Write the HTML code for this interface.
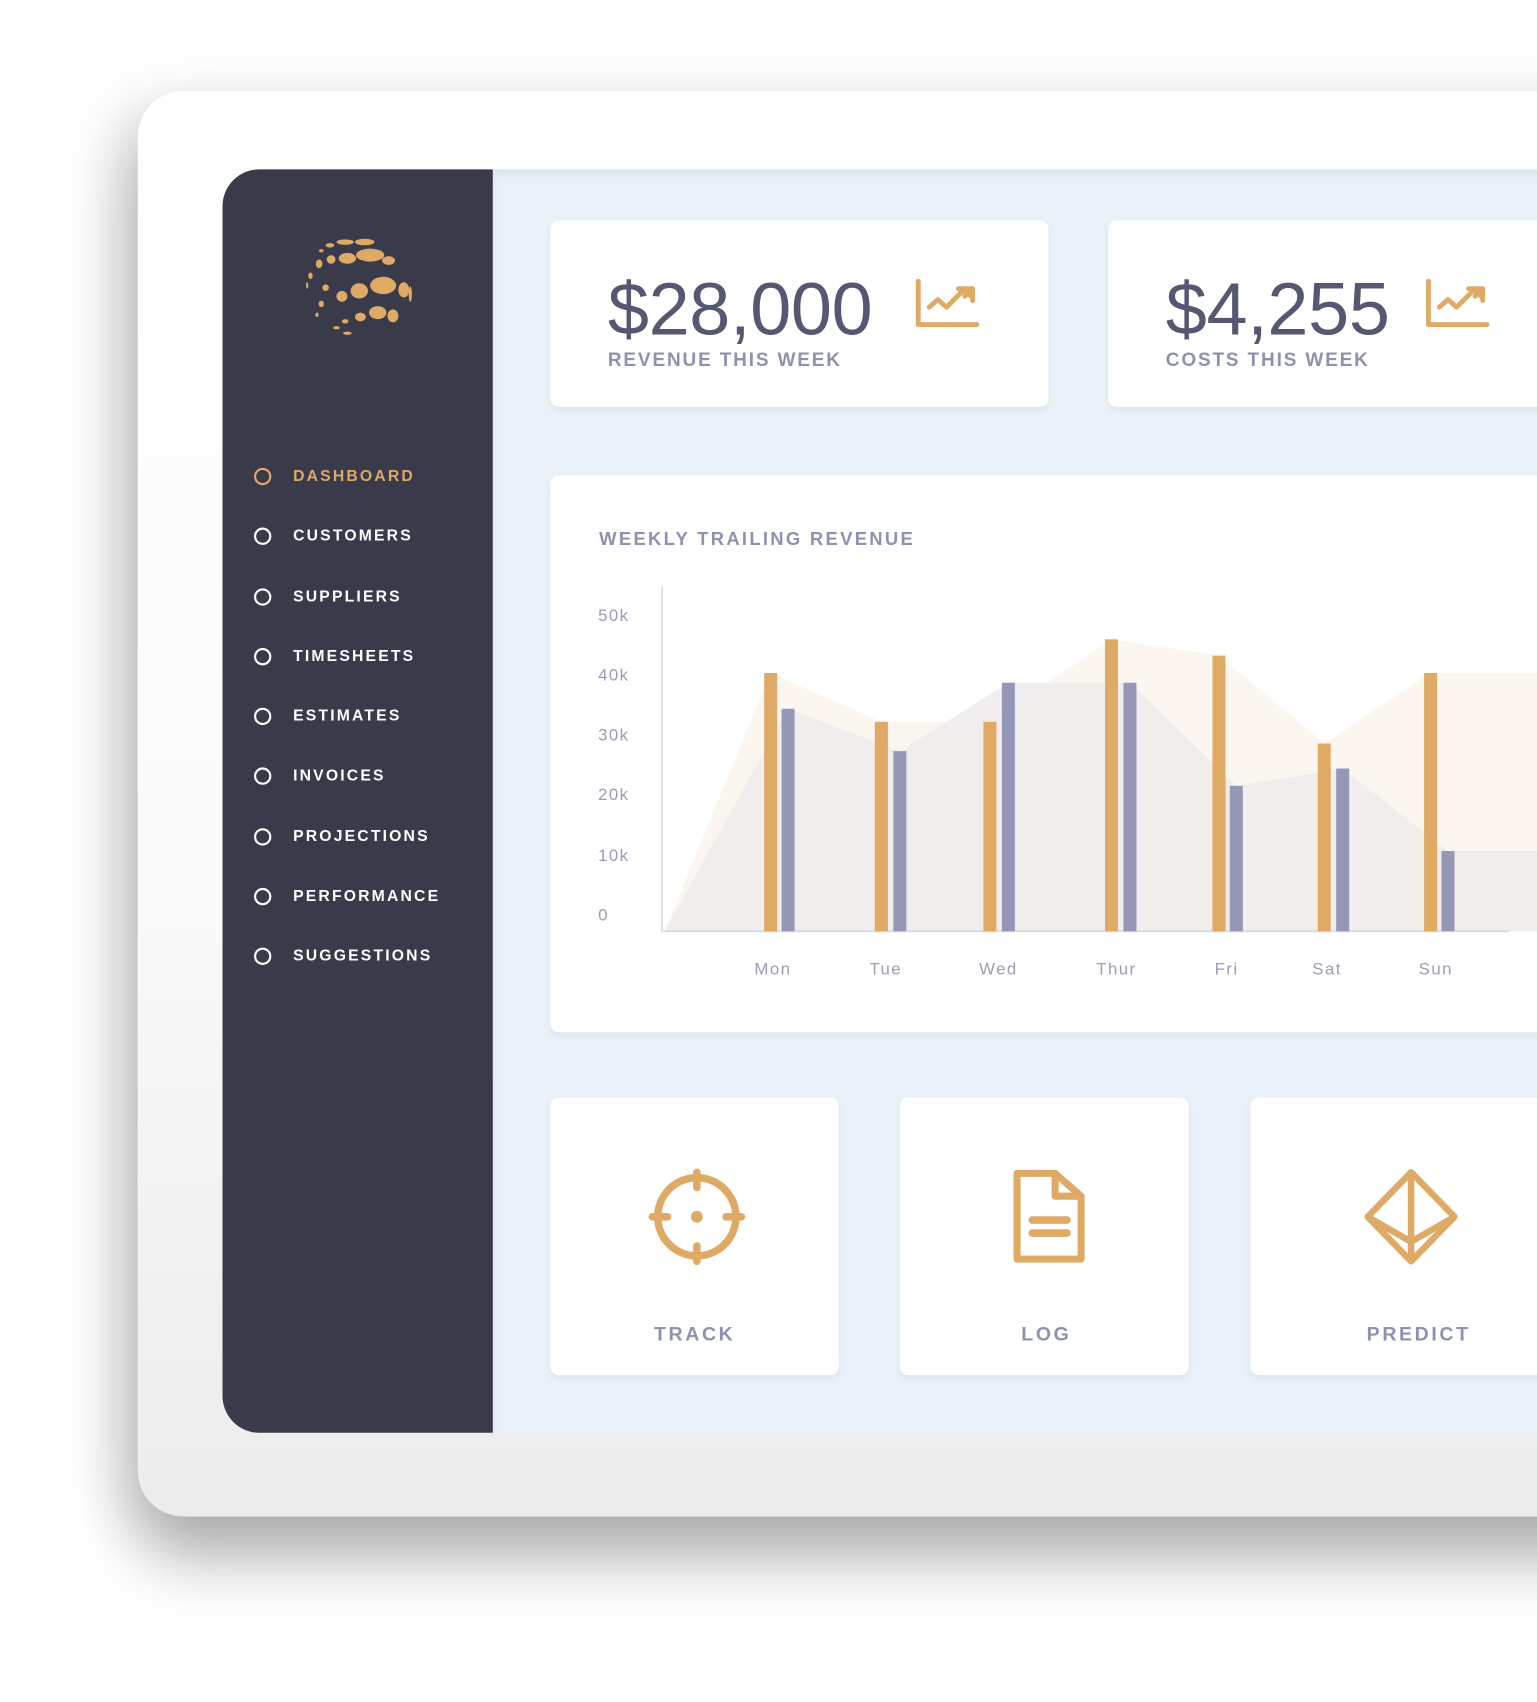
<!DOCTYPE html>
<html><head><meta charset="utf-8"><style>
html,body{margin:0;padding:0;background:#fff;width:1537px;height:1702px;overflow:hidden}
#s{position:absolute;left:0;top:0;width:1416px;height:1568px;transform:scale(1.08545);transform-origin:0 0;font-family:"Liberation Sans",sans-serif}
.frame{position:absolute;left:127px;top:84px;width:1400px;height:1313px;border-radius:42px;background:linear-gradient(180deg,#ffffff 0%,#fafafa 55%,#ececec 100%);box-shadow:0 40px 60px rgba(0,0,0,.28),-20px 10px 60px rgba(0,0,0,.12)}
.side{position:absolute;left:205px;top:156px;width:249px;height:1164px;background:#393a4a;border-radius:34px 0 0 34px}
.main{position:absolute;left:454px;top:156px;width:1000px;height:1164px;background:#ebf1f9;box-shadow:inset 0 6px 8px rgba(120,130,160,.12)}
.card{position:absolute;background:#fff;border-radius:8px;box-shadow:0 3px 6px rgba(150,160,190,.15)}
.amt{position:absolute;font-size:68px;color:#555870;letter-spacing:-.3px;line-height:1}
.lbl{position:absolute;font-size:17.5px;font-weight:bold;color:#8e92b0;letter-spacing:1.7px}
.nav{position:absolute;left:234px;font-size:14.5px;font-weight:bold;color:#fff;letter-spacing:2px;line-height:18px}
.nav i{position:absolute;left:0;top:1px;width:12px;height:12px;border:2px solid #fff;border-radius:50%}
.nav span{position:absolute;left:36px;white-space:nowrap}
.ax{position:absolute;font-size:15.5px;color:#9a9db5;letter-spacing:1.3px}
.bl{position:absolute;top:1219px;font-size:18px;font-weight:bold;color:#8e92b0;letter-spacing:2.4px;text-align:center}
</style></head><body><div id="s">
<div class="frame"></div>
<div class="main"></div>
<div class="side"></div>
<svg style="position:absolute;left:278px;top:216px" width="104" height="96" viewBox="0 0 104 96" fill="#dfaa66">
<ellipse cx="40" cy="7" rx="8" ry="2.5"/><ellipse cx="58" cy="7" rx="9" ry="3"/><ellipse cx="26" cy="10" rx="4" ry="2"/><ellipse cx="18" cy="15" rx="2" ry="1.5"/>
<ellipse cx="16" cy="27" rx="3" ry="4"/><ellipse cx="27" cy="23" rx="4" ry="4"/><ellipse cx="42" cy="22" rx="8" ry="5"/><ellipse cx="63" cy="19" rx="13" ry="6"/><ellipse cx="80" cy="24" rx="6" ry="4"/>
<ellipse cx="8" cy="38" rx="2" ry="3"/><ellipse cx="5" cy="47" rx="1" ry="3"/><ellipse cx="22" cy="49" rx="3" ry="3"/><ellipse cx="37" cy="57" rx="5" ry="5"/><ellipse cx="53" cy="52" rx="8" ry="7"/><ellipse cx="75" cy="47" rx="12" ry="8"/><ellipse cx="94" cy="51" rx="5" ry="7"/><ellipse cx="100" cy="55" rx="1.5" ry="7"/>
<ellipse cx="18" cy="64" rx="2.5" ry="3"/><ellipse cx="14" cy="74" rx="1.5" ry="2"/><ellipse cx="40" cy="80" rx="3" ry="2"/><ellipse cx="54" cy="76" rx="5" ry="4"/><ellipse cx="70" cy="72" rx="8" ry="6"/><ellipse cx="84" cy="75" rx="5" ry="6"/><ellipse cx="32" cy="86" rx="3" ry="1.5"/><ellipse cx="42" cy="91" rx="4" ry="1.5"/>
</svg>
<div class="nav" style="top:430px;color:#dfaa66"><i style="border-color:#dfaa66"></i><span>DASHBOARD</span></div>
<div class="nav" style="top:485px"><i></i><span>CUSTOMERS</span></div>
<div class="nav" style="top:541px"><i></i><span>SUPPLIERS</span></div>
<div class="nav" style="top:596px"><i></i><span>TIMESHEETS</span></div>
<div class="nav" style="top:651px"><i></i><span>ESTIMATES</span></div>
<div class="nav" style="top:706px"><i></i><span>INVOICES</span></div>
<div class="nav" style="top:762px"><i></i><span>PROJECTIONS</span></div>
<div class="nav" style="top:817px"><i></i><span>PERFORMANCE</span></div>
<div class="nav" style="top:872px"><i></i><span>SUGGESTIONS</span></div>

<div class="card" style="left:507px;top:203px;width:459px;height:172px"></div>
<div class="card" style="left:1021px;top:203px;width:459px;height:172px"></div>
<div class="amt" style="left:560px;top:251px">$28,000</div>
<div class="lbl" style="left:560px;top:321px">REVENUE THIS WEEK</div>
<div class="amt" style="left:1074px;top:251px">$4,255</div>
<div class="lbl" style="left:1074px;top:321px">COSTS THIS WEEK</div>
<svg style="position:absolute;left:843px;top:257px" width="60" height="46" viewBox="0 0 60 46" fill="none" stroke="#dfaa66" stroke-width="4.5" stroke-linecap="round" stroke-linejoin="round"><path d="M3 2V42H57"/><path d="M13 26L21 19L29 26L44 11"/><path d="M40 9H53V20" fill="#dfaa66"/><path d="M53 9L46 16"/></svg>
<svg style="position:absolute;left:1313px;top:257px" width="60" height="46" viewBox="0 0 60 46" fill="none" stroke="#dfaa66" stroke-width="4.5" stroke-linecap="round" stroke-linejoin="round"><path d="M3 2V42H57"/><path d="M13 26L21 19L29 26L44 11"/><path d="M40 9H53V20" fill="#dfaa66"/><path d="M53 9L46 16"/></svg>

<div class="card" style="left:507px;top:438px;width:950px;height:513px"></div>
<div class="lbl" style="left:552px;top:487px;font-size:17px;letter-spacing:2.1px">WEEKLY TRAILING REVENUE</div>
<div class="ax" style="left:551px;top:559px">50k</div>
<div class="ax" style="left:551px;top:614px">40k</div>
<div class="ax" style="left:551px;top:669px">30k</div>
<div class="ax" style="left:551px;top:724px">20k</div>
<div class="ax" style="left:551px;top:780px">10k</div>
<div class="ax" style="left:551px;top:835px">0</div>
<svg style="position:absolute;left:0;top:0" width="1416" height="1000">
<path d="M612 858L710 620L812 665L912 665L1024 589L1123 604L1220 685L1318 620L1416 620V858Z" fill="#fbf6ef"/>
<path d="M612 858L726 653L829 692L929 629L1041 629L1139 724L1237 708L1334 784L1416 784V858Z" fill="#efebec" opacity=".85"/>
<path d="M610 541V858H1390" fill="none" stroke="#d6d8e2" stroke-width="1.5"/>
<g fill="#dfaa66"><rect x="704" y="620" width="12" height="238"/><rect x="806" y="665" width="12" height="193"/><rect x="906" y="665" width="12" height="193"/><rect x="1018" y="589" width="12" height="269"/><rect x="1117" y="604" width="12" height="254"/><rect x="1214" y="685" width="12" height="173"/><rect x="1312" y="620" width="12" height="238"/></g>
<g fill="#9497b5"><rect x="720" y="653" width="12" height="205"/><rect x="823" y="692" width="12" height="166"/><rect x="923" y="629" width="12" height="229"/><rect x="1035" y="629" width="12" height="229"/><rect x="1133" y="724" width="12" height="134"/><rect x="1231" y="708" width="12" height="150"/><rect x="1328" y="784" width="12" height="74"/></g>
</svg>
<div class="ax" style="left:695px;top:885px">Mon</div>
<div class="ax" style="left:801px;top:885px">Tue</div>
<div class="ax" style="left:902px;top:885px">Wed</div>
<div class="ax" style="left:1010px;top:885px">Thur</div>
<div class="ax" style="left:1119px;top:885px">Fri</div>
<div class="ax" style="left:1209px;top:885px">Sat</div>
<div class="ax" style="left:1307px;top:885px">Sun</div>

<div class="card" style="left:507px;top:1011px;width:266px;height:256px"></div>
<div class="card" style="left:829px;top:1011px;width:266px;height:256px"></div>
<div class="card" style="left:1152px;top:1011px;width:300px;height:256px"></div>
<svg style="position:absolute;left:596px;top:1076px" width="92" height="92" viewBox="0 0 92 92" fill="none" stroke="#dfaa66" stroke-width="7" stroke-linecap="round"><circle cx="46" cy="45" r="36"/><path d="M46 4V18M46 72V86M5 45H19M73 45H87"/><circle cx="46" cy="45" r="2" fill="#dfaa66"/></svg>
<svg style="position:absolute;left:930px;top:1076px" width="72" height="92" viewBox="0 0 72 92" fill="none" stroke="#dfaa66" stroke-width="6.5" stroke-linejoin="round" stroke-linecap="round"><path d="M7 5H42L66 26V84H7Z"/><path d="M42 5V26H66"/><path d="M21 48H53M21 60H53" stroke-width="7"/></svg>
<svg style="position:absolute;left:1254px;top:1076px" width="92" height="92" viewBox="0 0 92 92" fill="none" stroke="#dfaa66" stroke-width="6" stroke-linejoin="round"><path d="M46 4L86 45L46 86L6 45Z"/><path d="M46 4V86M6 45L46 68L86 45"/></svg>
<div class="bl" style="left:573px;width:134px">TRACK</div>
<div class="bl" style="left:897px;width:134px">LOG</div>
<div class="bl" style="left:1240px;width:134px">PREDICT</div>
</div></body></html>
